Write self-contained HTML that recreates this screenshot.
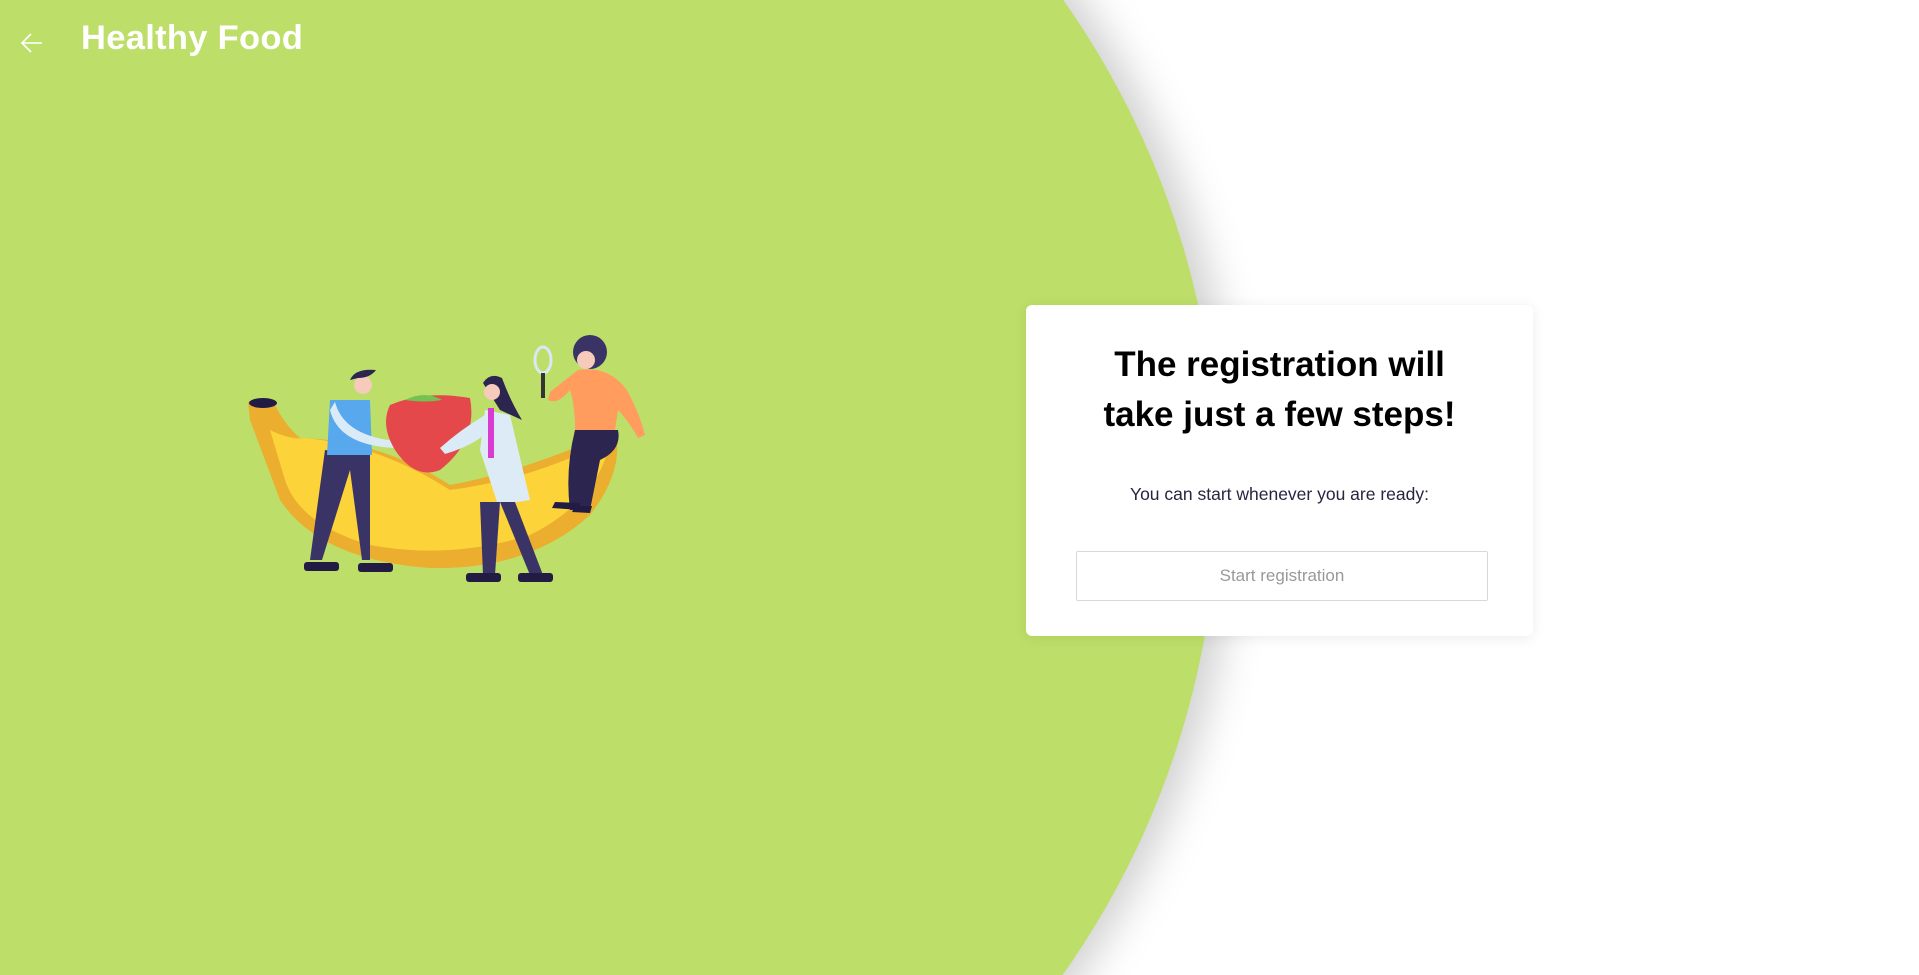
<!DOCTYPE html>
<html><head><meta charset="utf-8"><style>
html,body{margin:0;padding:0;width:1919px;height:975px;overflow:hidden;background:#fff;font-family:"Liberation Sans",sans-serif}
.wrap{position:relative;width:1919px;height:975px;overflow:hidden}
svg.bg{position:absolute;left:0;top:0}
.hdr{position:absolute;left:81px;top:19px;color:#fff;font-weight:bold;font-size:34.5px;letter-spacing:.3px}
.arrow{position:absolute;left:20px;top:32px}
.card{position:absolute;left:1026px;top:305px;width:507px;height:331px;background:#fff;border-radius:6px;box-shadow:0 2px 14px rgba(0,0,0,.08);text-align:center}
.card h1{margin:35px 0 0;font-size:35px;line-height:50px;font-weight:bold;color:#000}
.card p{margin:44px 0 0;font-size:17.5px;color:#2a2440}
.btn{position:absolute;left:50px;top:246px;width:410px;height:48px;border:1px solid #d8d8d8;border-radius:2px;line-height:48px;color:#999;font-size:17px}
svg.ill{position:absolute;left:230px;top:320px}
</style></head><body><div class="wrap">
<svg class="bg" width="1919" height="975" viewBox="0 0 1919 975">
<defs><filter id="f" x="-10%" y="-10%" width="120%" height="120%"><feGaussianBlur stdDeviation="20"/></filter></defs>
<circle cx="392" cy="487" r="844" fill="rgba(0,0,0,.18)" filter="url(#f)"/>
<circle cx="374" cy="487" r="844" fill="#bddf69"/>
</svg>
<svg class="arrow" width="24" height="22" viewBox="0 0 24 22"><path d="M22 11H2M11 2L2 11l9 9" fill="none" stroke="#fff" stroke-width="1.6"/></svg>
<div class="hdr">Healthy Food</div>
<svg class="ill" width="450" height="280" viewBox="0 0 450 280">
<path d="M18 82 Q30 75 45 85 Q55 105 70 118 Q150 120 220 165 Q300 150 385 110 Q395 150 360 195 Q300 250 200 248 Q90 240 50 180 Q35 140 20 100Z" fill="#ebae2f"/>
<path d="M40 110 Q60 120 75 118 Q150 125 220 170 Q300 160 380 120 Q370 180 300 215 Q220 240 140 225 Q70 205 55 160Z" fill="#fdd33a"/>
<ellipse cx="33" cy="83" rx="14" ry="5" fill="#221c44"/>
<path d="M95 130 L140 135 L140 240 L132 240 L120 150 L92 240 L80 240Z" fill="#3a3466"/>
<path d="M100 80 L140 80 L142 135 L97 135Z" fill="#58a8ee"/>
<path d="M105 82 Q115 120 180 122 L180 128 Q110 130 100 90Z" fill="#dbeaf7"/>
<circle cx="133" cy="65" r="9" fill="#f6cbbb"/><path d="M120 60 Q125 48 146 50 Q140 58 128 58Z" fill="#2b2550"/>
<rect x="74" y="242" width="35" height="9" rx="3" fill="#221c44"/><rect x="128" y="243" width="35" height="9" rx="3" fill="#221c44"/>
<path d="M160 85 Q195 70 240 78 Q248 120 210 150 Q185 160 165 130 Q150 105 160 85Z" fill="#e4484a"/>
<path d="M175 80 Q195 70 212 80 Q195 83 175 80Z" fill="#74c24f"/>
<path d="M255 90 L280 95 L300 180 L268 185 L250 130Z" fill="#dcebf6"/>
<path d="M250 182 L270 182 L265 255 L253 255Z" fill="#3a3466"/><path d="M270 182 L285 182 L313 255 L300 255Z" fill="#3a3466"/>
<path d="M255 95 Q230 110 210 128 L215 134 Q245 125 260 110Z" fill="#dbeaf7"/>
<rect x="258" y="88" width="6" height="50" fill="#d93ad2"/>
<path d="M253 63 Q260 52 272 58 Q280 80 292 100 L270 90Z" fill="#2b2550"/><circle cx="262" cy="72" r="8" fill="#f6cbbb"/>
<rect x="236" y="253" width="35" height="9" rx="3" fill="#221c44"/><rect x="288" y="253" width="35" height="9" rx="3" fill="#221c44"/>
<ellipse cx="313" cy="40" rx="8" ry="13" fill="none" stroke="#d8e8f4" stroke-width="3"/><rect x="311" y="53" width="4" height="25" fill="#333"/>
<path d="M348 50 Q380 45 398 72 Q410 95 415 115 L408 118 Q398 100 388 90 L385 110 L345 110 Q345 85 340 70 Q328 85 318 80 L320 72 Z" fill="#ff9c5e"/>
<path d="M345 110 L388 110 Q392 130 370 140 L360 190 L340 190 Q335 150 345 110Z" fill="#2b2550"/>
<path d="M325 182 L350 183 L350 190 L322 188Z M345 186 L362 186 L360 193 L342 192Z" fill="#221c44"/>
<circle cx="360" cy="32" r="17" fill="#3a3466"/><circle cx="356" cy="40" r="9" fill="#f6cbbb"/>
</svg>
<div class="card">
<h1>The registration will<br>take just a few steps!</h1>
<p>You can start whenever you are ready:</p>
<div class="btn">Start registration</div>
</div>
</div></body></html>
